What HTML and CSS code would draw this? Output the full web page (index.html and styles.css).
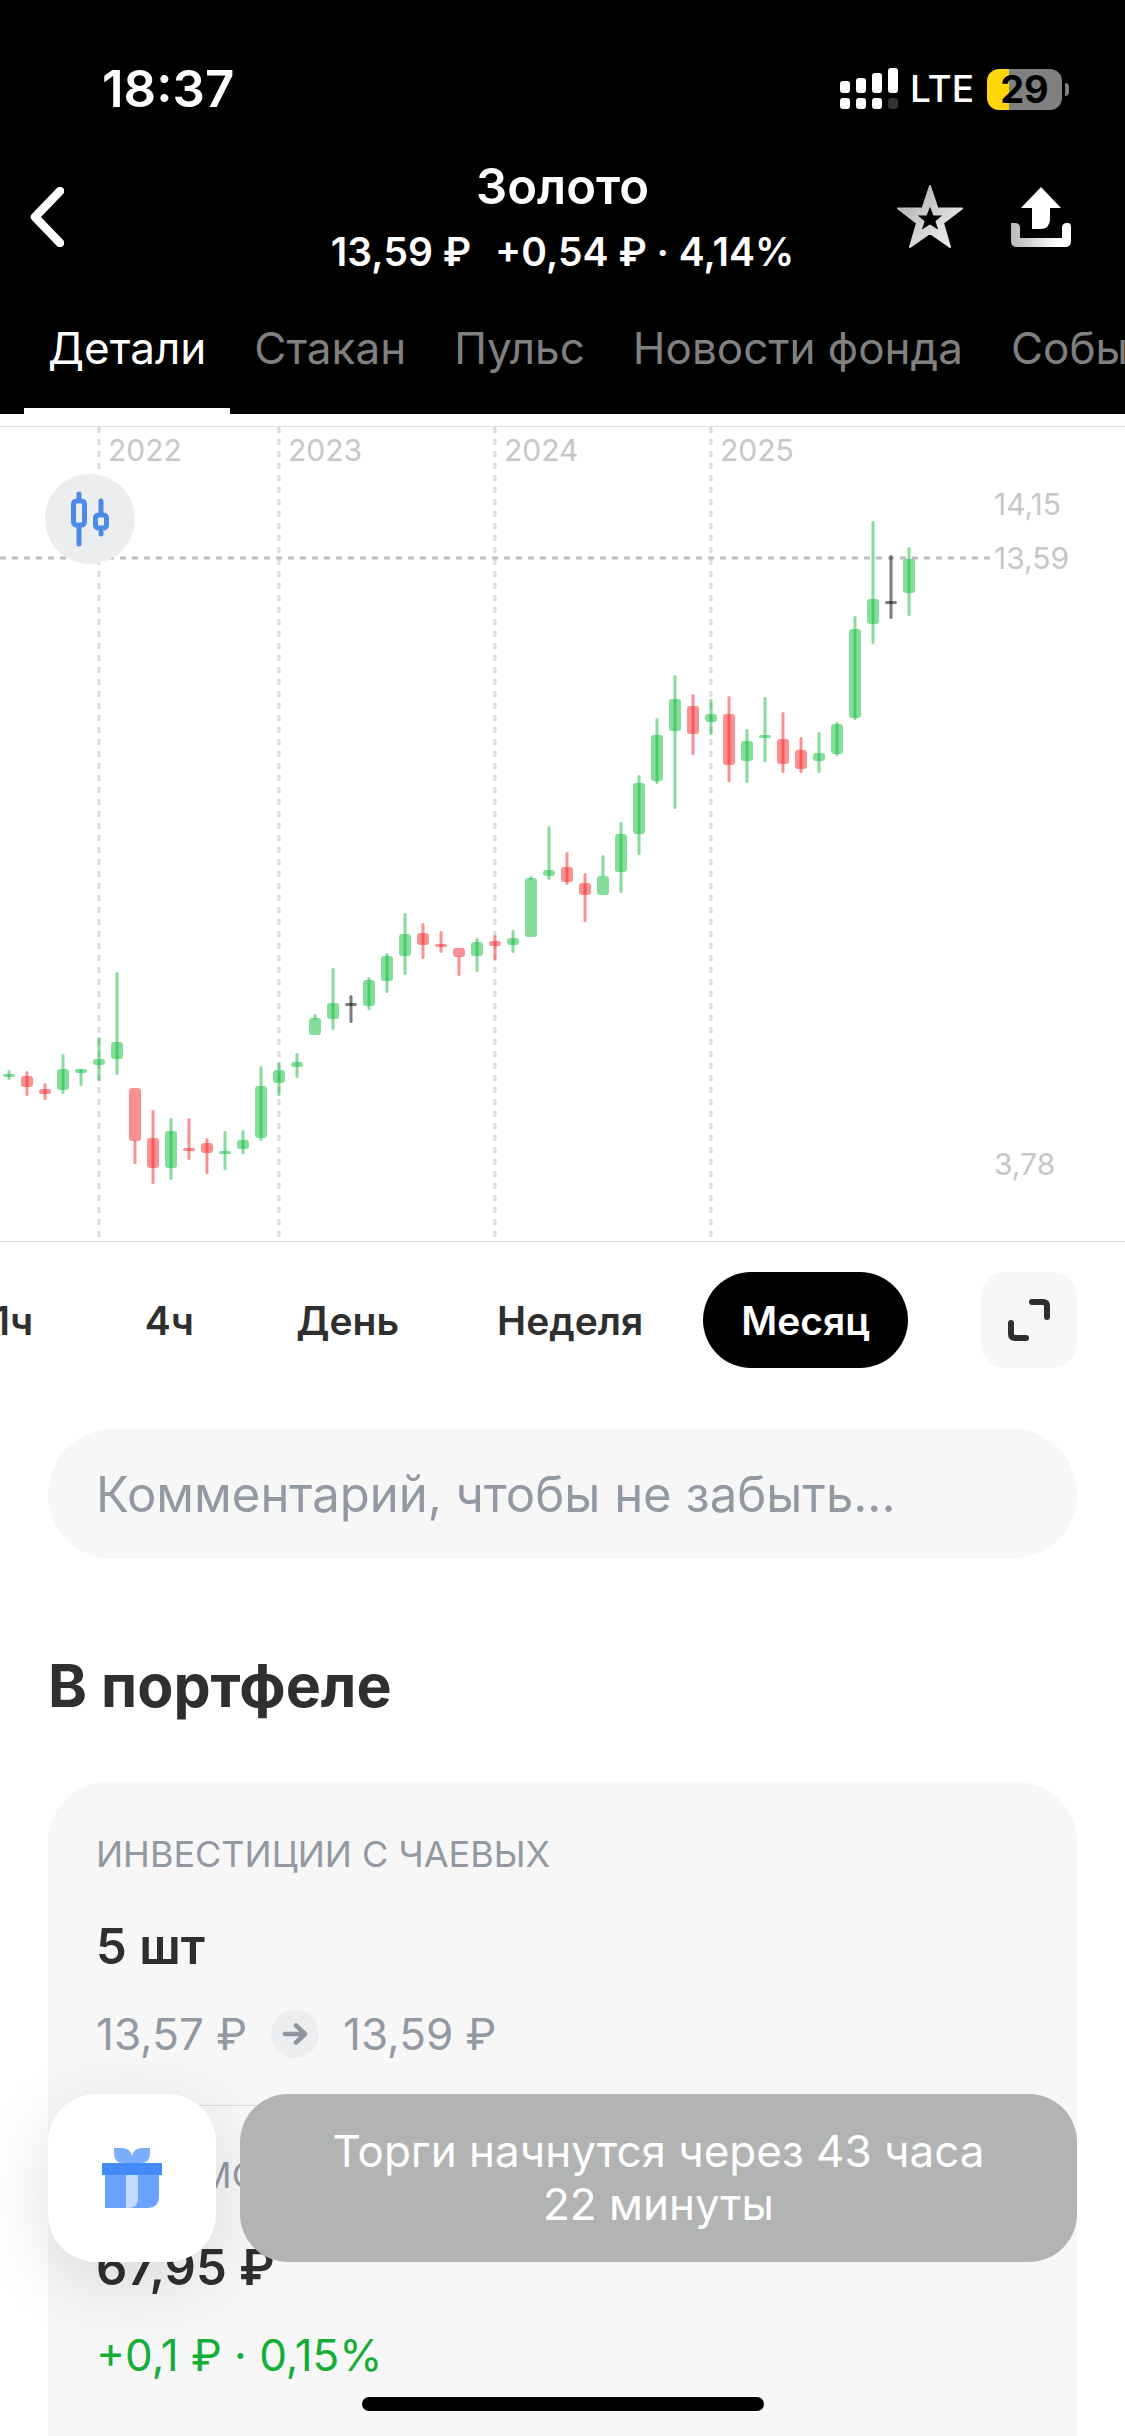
FILE: index.html
```html
<!DOCTYPE html>
<html lang="ru">
<head>
<meta charset="utf-8">
<meta name="viewport" content="width=device-width, initial-scale=1">
<title>Золото</title>
<link rel="stylesheet" href="styles.css">
</head>
<body>
<header class="header">
  <div class="status">
    <span class="status-time">18:37</span>
    <div class="status-right">
      <svg class="signal" width="58" height="42" viewBox="0 0 58 42" aria-hidden="true">
        <g fill="#fff">
          <rect x="0" y="13" width="10" height="12" rx="3"/><rect x="16" y="10" width="10" height="15" rx="3"/>
          <rect x="32" y="5" width="10" height="20" rx="3"/><rect x="48" y="0" width="10" height="25" rx="3"/>
          <rect x="0" y="30" width="10" height="11" rx="3"/><rect x="16" y="30" width="10" height="11" rx="3"/>
          <rect x="32" y="30" width="10" height="11" rx="3"/>
        </g>
        <rect x="48" y="30" width="10" height="11" rx="3" fill="#333"/>
      </svg>
      <span class="status-net">LTE</span>
      <span class="battery">29</span>
    </div>
  </div>
  <div class="titlebar">
    <button class="icon-btn" type="button" aria-label="Назад">
      <svg width="34" height="60" viewBox="0 0 34 60"><path d="M30 4 5 30 30 56" fill="none" stroke="#fff" stroke-width="8.5" stroke-linecap="round" stroke-linejoin="round"/></svg>
    </button>
    <div class="titles">
      <h1>Золото</h1>
      <p class="quote"><span>13,59 ₽</span><span>+0,54 ₽ · 4,14%</span></p>
    </div>
    <div class="actions">
      <button class="icon-btn" type="button" aria-label="В избранное">
        <svg width="66" height="63" viewBox="0 0 66 63">
          <defs><linearGradient id="star" x1="0" y1="0" x2="1" y2="1"><stop offset="0" stop-color="#a8a8a8"/><stop offset=".75" stop-color="#e4e4e4"/></linearGradient></defs>
          <path fill="url(#star)" stroke="url(#star)" stroke-width="2" stroke-linejoin="round" fill-rule="evenodd" d="M33 1 40.500 23.500H65L46 38 53 62 33 48 13 62 20 38 1 23.500H25.500ZM33 19 29 29.500H18L26.500 36.500 23 47 33 40.500 43 47 39.500 36.500 48 29.500H37Z"/>
        </svg>
      </button>
      <button class="icon-btn" type="button" aria-label="Поделиться">
        <svg width="60" height="60" viewBox="0 0 60 60">
          <defs><linearGradient id="tray" x1="0" x2="1"><stop offset="0" stop-color="#b8b8b8"/><stop offset=".8" stop-color="#fff"/></linearGradient></defs>
          <path fill="url(#tray)" d="M0 36H4Q9 36 9 41V51H51V41Q51 36 56 36H57Q60 36 60 40V54Q60 60 54 60H6Q0 60 0 54Z"/>
          <path fill="#fff" d="M30 0 50 21H39V32Q39 42 29 42H21V21H10Z"/>
        </svg>
      </button>
    </div>
  </div>
  <nav class="tabs">
    <a class="tab tab-active" href="#details">Детали</a>
    <a class="tab" href="#book">Стакан</a>
    <a class="tab" href="#pulse">Пульс</a>
    <a class="tab" href="#news">Новости фонда</a>
    <a class="tab" href="#events">События</a>
  </nav>
</header>

<main class="main" id="details">
  <section class="chart">
    <svg class="chart-svg" viewBox="0 426 1125 814" role="img" aria-label="График цены по месяцам">
      <g class="grid">
        <path d="M99 426V1237M279 426V1237M495 426V1237M711 426V1237"/>
      </g>
      <path class="price-line" d="M0 557H992"/>
      <g class="axis">
        <text x="108" y="460">2022</text><text x="288" y="460">2023</text>
        <text x="504" y="460">2024</text><text x="720" y="460">2025</text>
        <text x="994" y="514">14,15</text><text x="994" y="568">13,59</text><text x="994" y="1174">3,78</text>
      </g>
      <g id="candles"></g>
    </svg>
    <button class="chart-type" type="button" aria-label="Свечной график">
      <svg width="40" height="56" viewBox="0 0 40 56" fill="none" stroke="#4a8bea" stroke-width="5" stroke-linecap="round">
        <path d="M9 3V9M9 36V53M31 10V23M31 41V43"/>
        <rect x="3.500" y="10" width="11" height="24" rx="3"/>
        <rect x="25.500" y="24" width="11" height="13" rx="3"/>
      </svg>
    </button>
  </section>

  <div class="periods">
    <div class="period-list">
      <button class="period" type="button">1ч</button>
      <button class="period" type="button">4ч</button>
      <button class="period" type="button">День</button>
      <button class="period" type="button">Неделя</button>
      <button class="period period-active" type="button">Месяц</button>
    </div>
    <button class="expand" type="button" aria-label="Развернуть">
      <svg width="42" height="42" viewBox="0 0 42 42" fill="none" stroke="#2f2f2f" stroke-width="6" stroke-linecap="round"><path d="M24 3H35Q39 3 39 7V18M3 24V35Q3 39 7 39H18"/></svg>
    </button>
  </div>

  <input class="comment" type="text" aria-label="Комментарий" placeholder="Комментарий, чтобы не забыть...">

  <h2>В портфеле</h2>
  <section class="card">
    <div class="entry">
      <p class="label">ИНВЕСТИЦИИ С ЧАЕВЫХ</p>
      <p class="value">5 шт</p>
      <p class="note">13,57 ₽
        <svg width="48" height="48" viewBox="0 0 48 48" aria-hidden="true"><circle cx="24" cy="24" r="24" fill="#ebedee"/><path d="M14 24H34M25 15.500 34 24 25 32.500" fill="none" stroke="#8f959f" stroke-width="4.500" stroke-linecap="round" stroke-linejoin="round"/></svg>
        13,59 ₽</p>
    </div>
    <div class="entry">
      <p class="label">СТОИМОСТЬ</p>
      <p class="value">67,95 ₽</p>
      <p class="note note-up">+0,1 ₽ · 0,15%</p>
    </div>
  </section>
</main>

<footer class="dock">
  <div class="dock-row">
    <button class="gift" type="button" aria-label="Подарок">
      <svg width="60" height="60" viewBox="0 0 60 60">
        <path fill="#7badff" d="M12 0H20Q28 0 30 8Q32 0 40 0H48V5Q48 15 39 15H21Q12 15 12 5Z"/>
        <path fill="#6aa2ff" d="M3 27H57V48Q57 60 45 60H3Z"/>
        <path fill="#c3dbff" d="M24 27H36V50Q36 60 26 60H24Z"/>
        <path fill="#428bf9" d="M0 15H60V27H0Z"/>
      </svg>
    </button>
    <button class="notice" type="button">Торги начнутся через 43 часа 22 минуты</button>
  </div>
  <div class="home-bar"></div>
</footer>
<script src="chart.js"></script>
</body>
</html>
```

FILE: chart.js
```js
// One candle per month: [high, body top, body bottom, low, kind]
var candles = [
  [1069,1073,1076,1079,'up'],[1070,1075,1086,1095,'down'],[1082,1088,1093,1099,'down'],[1053,1068,1089,1093,'up'],
  [1068,1068,1072,1085,'up'],[1036,1058,1064,1080,'up'],[971,1041,1058,1074,'up'],[1139,1087,1140,1163,'down'],
  [1109,1137,1167,1183,'down'],[1117,1130,1167,1179,'up'],[1117,1147,1150,1159,'down'],[1137,1142,1152,1173,'down'],
  [1130,1150,1153,1169,'up'],[1129,1139,1148,1153,'up'],[1065,1085,1137,1140,'up'],[1061,1069,1082,1095,'up'],
  [1052,1061,1066,1077,'up'],[1013,1017,1034,1019,'up'],[967,1002,1018,1029,'up'],[994,1002,1005,1022,'flat'],
  [976,979,1005,1009,'up'],[952,955,980,992,'up'],[912,933,955,974,'up'],[922,932,944,958,'down'],
  [930,943,946,952,'down'],[955,947,956,975,'down'],[937,941,955,971,'up'],[934,940,945,959,'down'],
  [929,937,944,952,'up'],[875,877,936,879,'up'],[825,869,875,879,'up'],[851,866,881,884,'down'],
  [872,882,894,921,'down'],[854,875,894,876,'up'],[821,833,871,892,'up'],[774,782,833,854,'up'],
  [717,734,780,783,'up'],[674,698,730,808,'up'],[693,705,733,754,'down'],[698,713,721,734,'up'],
  [695,713,764,781,'down'],[728,740,760,782,'up'],[696,734,737,761,'up'],[711,738,763,772,'down'],
  [736,749,768,772,'down'],[731,752,760,772,'up'],[721,723,753,755,'up'],[615,628,717,719,'up'],
  [520,598,623,643,'up'],[554,600,603,618,'flat'],[546,558,592,615,'up']
];

var layer = document.getElementById('candles');

function bar(x, y, width, height, radius, kind) {
  var rect = document.createElementNS('http://www.w3.org/2000/svg', 'rect');
  rect.setAttribute('x', x);
  rect.setAttribute('y', y);
  rect.setAttribute('width', width);
  rect.setAttribute('height', height);
  rect.setAttribute('rx', Math.min(radius, height / 2));
  rect.setAttribute('class', kind);
  layer.appendChild(rect);
}

candles.forEach(function (c, i) {
  var x = 9 + 18 * i;
  bar(x - 6, c[1], 12, c[2] - c[1], 3, c[4]);
  bar(x - 1.5, c[0], 3, c[3] - c[0], 1.5, c[4]);
});
```

FILE: styles.css
```css
* { box-sizing: border-box; }

body {
  margin: 0;
  min-height: 100vh;
  display: flex;
  flex-direction: column;
  overflow-x: hidden;
  background: #fff;
  color: #2f2f2f;
  font-family: Inter, "Liberation Sans", sans-serif;
}

h1, h2, p { margin: 0; }

button {
  border: 0;
  padding: 0;
  background: none;
  color: inherit;
  font: inherit;
}

svg { display: block; }

/* Header */
.header {
  background: #000;
  color: #fff;
  overflow: hidden;
}

.status {
  display: flex;
  justify-content: space-between;
  align-items: center;
  padding: 59px 56px 0 102px;
  line-height: 60px;
}

.status-time { font-size: 51px; font-weight: 600; }

.status-right { display: flex; align-items: center; }

.status-net {
  margin: 0 13px 0 12px;
  font-size: 37px;
  font-weight: 500;
}

.battery {
  position: relative;
  width: 75px;
  height: 41px;
  margin-right: 7px;
  border-radius: 12px;
  background: linear-gradient(90deg, #ffd60a 22px, #808080 22px);
  color: #000;
  font-size: 38px;
  font-weight: 700;
  line-height: 41px;
  text-align: center;
}

.battery::after {
  content: "";
  position: absolute;
  left: 78px;
  top: 14px;
  width: 4px;
  height: 13px;
  border-radius: 0 4px 4px 0;
  background: #808080;
}

.titlebar {
  display: grid;
  grid-template-columns: 1fr auto 1fr;
  align-items: center;
  padding: 38px 54px 0 30px;
}

.titles { margin-left: 24px; text-align: center; }

h1 {
  font-size: 49px;
  font-weight: 600;
  line-height: 60px;
}

.quote {
  display: flex;
  justify-content: center;
  gap: 24px;
  margin-top: 11px;
  font-size: 39px;
  font-weight: 600;
  line-height: 48px;
}

.actions {
  display: flex;
  justify-content: flex-end;
  align-items: center;
  gap: 48px;
}

.tabs {
  display: flex;
  padding: 42px 0 0 24px;
}

.tab {
  flex: none;
  padding: 0 24px 30px;
  border-bottom: 6px solid transparent;
  color: #808080;
  font-size: 44px;
  line-height: 60px;
  text-decoration: none;
  white-space: nowrap;
}

.tab-active { border-color: #fff; color: #fff; }

/* Chart */
.main {
  flex: 1;
  display: flex;
  flex-direction: column;
  padding-top: 12px;
}

.chart {
  position: relative;
  border-top: 1px solid #dcdddd;
  border-bottom: 1px solid #dcdddd;
}

.chart-svg { width: 100%; height: auto; }

.grid path { stroke: #dcdcdc; stroke-width: 3; stroke-dasharray: 6 6; }

.price-line { stroke: #bdbebe; stroke-width: 3; stroke-dasharray: 6 6; }

.axis { fill: #c6c7c7; font-size: 30px; }

.up { fill: #0bbb37; fill-opacity: 0.5; }

.down { fill: #f32325; fill-opacity: 0.5; }

.flat { fill: #111; fill-opacity: 0.55; }

.chart-type {
  position: absolute;
  left: 45px;
  top: 47px;
  width: 90px;
  height: 90px;
  display: grid;
  place-items: center;
  border-radius: 50%;
  background: #ebedee;
}

/* Periods */
.periods {
  display: flex;
  gap: 73px;
  padding: 30px 48px 0 0;
}

.period-list {
  flex: 1;
  min-width: 0;
  display: flex;
  justify-content: flex-end;
  gap: 22px;
  overflow: hidden;
}

.period {
  flex: none;
  min-width: 134px;
  height: 96px;
  padding: 0 38px;
  border-radius: 48px;
  font-size: 39px;
  font-weight: 600;
}

.period-active { background: #000; color: #fff; }

.expand {
  flex: none;
  width: 96px;
  height: 96px;
  display: grid;
  place-items: center;
  border-radius: 24px;
  background: #f5f7f8;
}

.comment {
  height: 130px;
  margin: 61px 48px 0;
  padding: 0 48px;
  border: 0;
  border-radius: 65px;
  background: #f7f7f7;
  color: #2f2f2f;
  font-family: inherit;
  font-size: 49px;
}

.comment::placeholder { color: #9299a2; opacity: 1; }

/* Portfolio */
h2 {
  margin: 91px 48px 60px;
  font-size: 59px;
  font-weight: 700;
  line-height: 72px;
}

.card {
  flex: 1;
  margin: 0 48px;
  padding: 0 48px;
  border-radius: 60px 60px 0 0;
  background: #f7f7f7;
}

.entry { padding: 48px 0 41px; }

.entry + .entry { border-top: 1px solid #d8dadc; padding-top: 45px; }

.label {
  color: #9299a2;
  font-size: 36px;
  line-height: 48px;
}

.value {
  margin-top: 39px;
  font-size: 49px;
  font-weight: 600;
  line-height: 60px;
}

.note {
  display: flex;
  align-items: center;
  gap: 24px;
  margin-top: 27px;
  color: #9299a2;
  font-size: 44px;
  line-height: 60px;
}

.note-up { color: #14ae37; }

/* Floating dock */
.dock {
  position: fixed;
  left: 0;
  right: 0;
  bottom: 0;
  padding: 0 48px 25px;
}

.dock-row {
  display: flex;
  gap: 24px;
  min-height: 168px;
}

.gift {
  flex: none;
  width: 168px;
  display: grid;
  place-items: center;
  border-radius: 48px;
  background: #fff;
  box-shadow: 0 18px 72px rgba(0, 0, 20, 0.12);
}

.notice {
  flex: 1;
  padding: 0 72px;
  border-radius: 48px;
  background: #b2b3b3;
  color: #fff;
  font-size: 44px;
  line-height: 53px;
}

.home-bar {
  width: 402px;
  height: 14px;
  margin: 135px auto 0;
  border-radius: 7px;
  background: #000;
}
```
